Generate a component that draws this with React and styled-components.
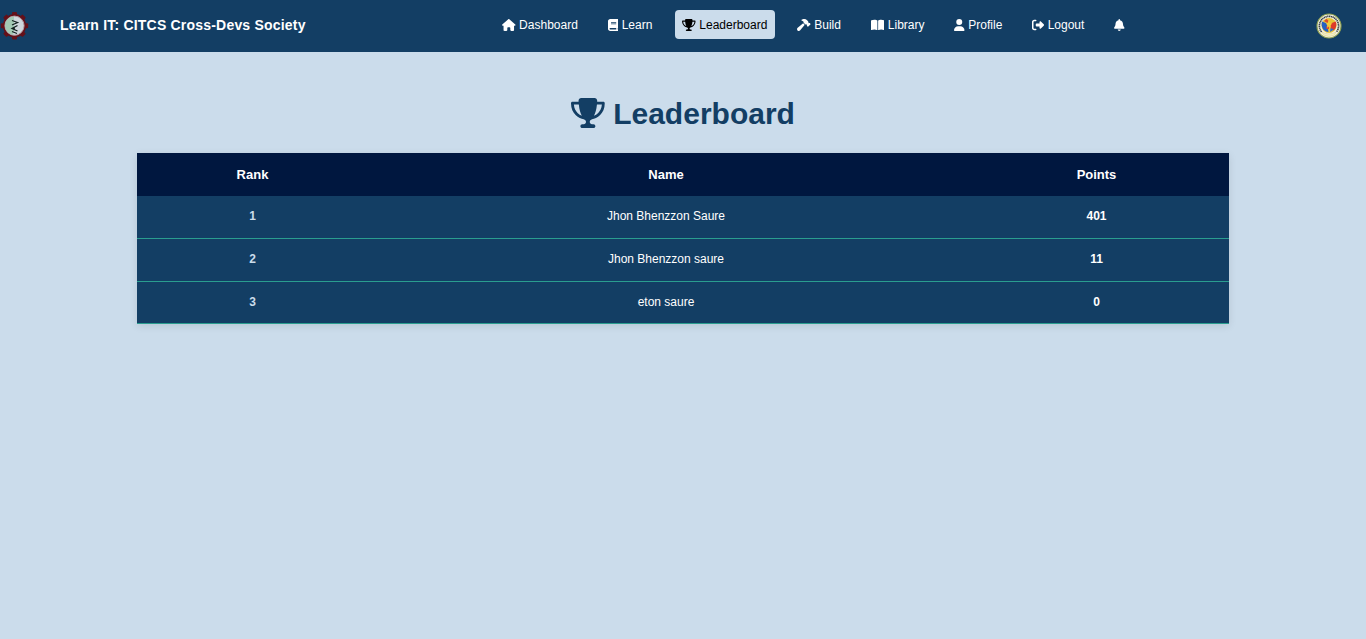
import React from 'react';
import styled, { createGlobalStyle } from 'styled-components';
import {
  FaHouse, FaBook, FaTrophy, FaHammer, FaBookOpen, FaUser, FaRightFromBracket, FaBell,
} from 'react-icons/fa6';

const GlobalStyle = createGlobalStyle`
  * { box-sizing: border-box; }
  body {
    margin: 0;
    min-height: 100vh;
    background: #cbdceb;
    font-family: Arial, "Liberation Sans", sans-serif;
    font-size: 12px;
  }
`;

const Header = styled.header`
  display: flex;
  align-items: center;
  height: 52px;
  padding-right: 22px;
  background: #133e64;
  color: #fff;
`;

const Logo = styled.svg`
  width: 30px;
  height: 30px;
  flex: none;
`;

const Brand = styled.div`
  width: 434.7px;
  padding: 0 0 2px 30px;
  font-size: 14px;
  font-weight: bold;
  letter-spacing: 0.2px;
  white-space: nowrap;
`;

const Nav = styled.nav`
  display: flex;
  flex: 1;
  gap: 15px;
  padding-bottom: 3px;
  margin-left: 30px;
`;

const NavLink = styled.a`
  height: 29px;
  padding: 7.5px;
  border-radius: 4px;
  line-height: 14px;
  white-space: nowrap;
  background: ${(p) => (p.$active ? '#cbdceb' : 'transparent')};
  color: ${(p) => (p.$active ? '#000' : '#fff')};

  svg {
    width: ${(p) => p.$iconWidth}px;
    height: 12px;
    vertical-align: -2px;
  }
`;

const Main = styled.main`
  width: 1092px;
  margin: 0 auto;
  padding-top: 44px;
`;

const Title = styled.h1`
  margin: 0 0 22px;
  font-size: 30px;
  line-height: 35px;
  text-align: center;
  color: #133e64;

  svg {
    width: 33.75px;
    height: 30px;
    vertical-align: -3.75px;
  }
`;

const Table = styled.table`
  width: 100%;
  table-layout: fixed;
  border-spacing: 0;
  background: #133e64;
  color: #fff;
  text-align: center;
  box-shadow: 0 2px 8px rgba(0, 0, 0, 0.1);
`;

const HeadCell = styled.th`
  width: ${(p) => p.$width}px;
  height: 43px;
  padding: 0;
  background: #00173f;
  font-size: 13px;
`;

const Row = styled.tr`
  height: 43px;

  &:last-child { height: 42px; }
`;

const Cell = styled.td`
  padding: 0 0 2px;
  border-bottom: 1px solid #2a9d8f;
  color: ${(p) => (p.$rank ? '#cbdceb' : '#fff')};
  font-weight: ${(p) => (p.$bold ? 'bold' : 'normal')};
`;

const links = [
  { label: 'Dashboard', Icon: FaHouse, iconWidth: 13.6 },
  { label: 'Learn', Icon: FaBook, iconWidth: 10.5 },
  { label: 'Leaderboard', Icon: FaTrophy, iconWidth: 13.6 },
  { label: 'Build', Icon: FaHammer, iconWidth: 13.6 },
  { label: 'Library', Icon: FaBookOpen, iconWidth: 13.5 },
  { label: 'Profile', Icon: FaUser, iconWidth: 10.5 },
  { label: 'Logout', Icon: FaRightFromBracket, iconWidth: 12 },
  { label: '', Icon: FaBell, iconWidth: 10.5 },
];

const rows = [
  [1, 'Jhon Bhenzzon Saure', 401],
  [2, 'Jhon Bhenzzon saure', 11],
  [3, 'eton saure', 0],
];

const GearLogo = () => (
  <Logo viewBox="0 0 30 30">
    <g fill="#641019">
      {[0, 45, 90, 135].map((a) => (
        <rect key={a} x="12" y="1" width="5" height="27.4" rx="1" transform={`rotate(${a} 14.5 14.7)`} />
      ))}
      <circle cx="14.5" cy="14.7" r="11.6" />
    </g>
    <circle cx="14.5" cy="14.7" r="9.6" fill="#cfd6dc" stroke="#b39ca3" strokeWidth="1" />
    <path d="M14 5.500a9.200 9.200 0 0 0-1 18.300l1-5z" fill="#a3c9b4" />
    <path d="M12 9.500l5.500 2-5.500 2.500M17.500 14.500l-5.500 3 5.500 2.500M14.200 16.300v3M12 20.500l5 2" fill="none" stroke="#12201f" strokeWidth="1.300" />
  </Logo>
);

const SealLogo = () => (
  <Logo viewBox="0 0 30 30">
    <circle cx="15" cy="15" r="12" fill="#f3f1e2" stroke="#8fa04f" strokeWidth="1.100" />
    <path d="M7.600 21a9.600 9.600 0 1 1 14.800 0" fill="none" stroke="#3b4044" strokeWidth="1.700" strokeDasharray="1.300 .5" />
    <circle cx="15" cy="14.500" r="7.600" fill="#e8c437" />
    <path d="M8 10.500l5 2 1.500 8.500c-5-.5-8-5-6.500-10.500z" fill="#2560c4" />
    <path d="M16.500 12.500l5.200-2c1.600 3.500 0 7.500-2.200 9l-3-2.500z" fill="#dd3a2a" />
    <path d="M10 10l2.500-2.300 2 2-1 2.300zM12.500 15h2.500v3h-2.500z" fill="#dd4a2c" />
    <path d="M16.500 17l3.500 1.500-4 2.500z" fill="#2e68c8" />
    <path d="M15 9l1 3 2.300.5-1.800 1.700.2 2.600-1.700-1.300-2 1.300.4-2.600-1.700-1.700 2.300-.5z" fill="#f3cb3a" />
    <path d="M8 21q7 4 14 0l-1.500 3q-5.500 3-11 0z" fill="#f6f0c4" stroke="#d9cf86" strokeWidth=".5" />
  </Logo>
);

export default function App() {
  return (
    <>
      <GlobalStyle />
      <Header>
        <GearLogo />
        <Brand>Learn IT: CITCS Cross-Devs Society</Brand>
        <Nav>
          {links.map(({ label, Icon, iconWidth }) => (
            <NavLink key={label} $active={label === 'Leaderboard'} $iconWidth={iconWidth}>
              <Icon />{label && ` ${label}`}
            </NavLink>
          ))}
        </Nav>
        <SealLogo />
      </Header>
      <Main>
        <Title><FaTrophy /> Leaderboard</Title>
        <Table>
          <thead>
            <tr>
              <HeadCell $width={231}>Rank</HeadCell>
              <HeadCell $width={596}>Name</HeadCell>
              <HeadCell $width={265}>Points</HeadCell>
            </tr>
          </thead>
          <tbody>
            {rows.map(([rank, name, points]) => (
              <Row key={rank}>
                <Cell $rank $bold>{rank}</Cell>
                <Cell>{name}</Cell>
                <Cell $bold>{points}</Cell>
              </Row>
            ))}
          </tbody>
        </Table>
      </Main>
    </>
  );
}
